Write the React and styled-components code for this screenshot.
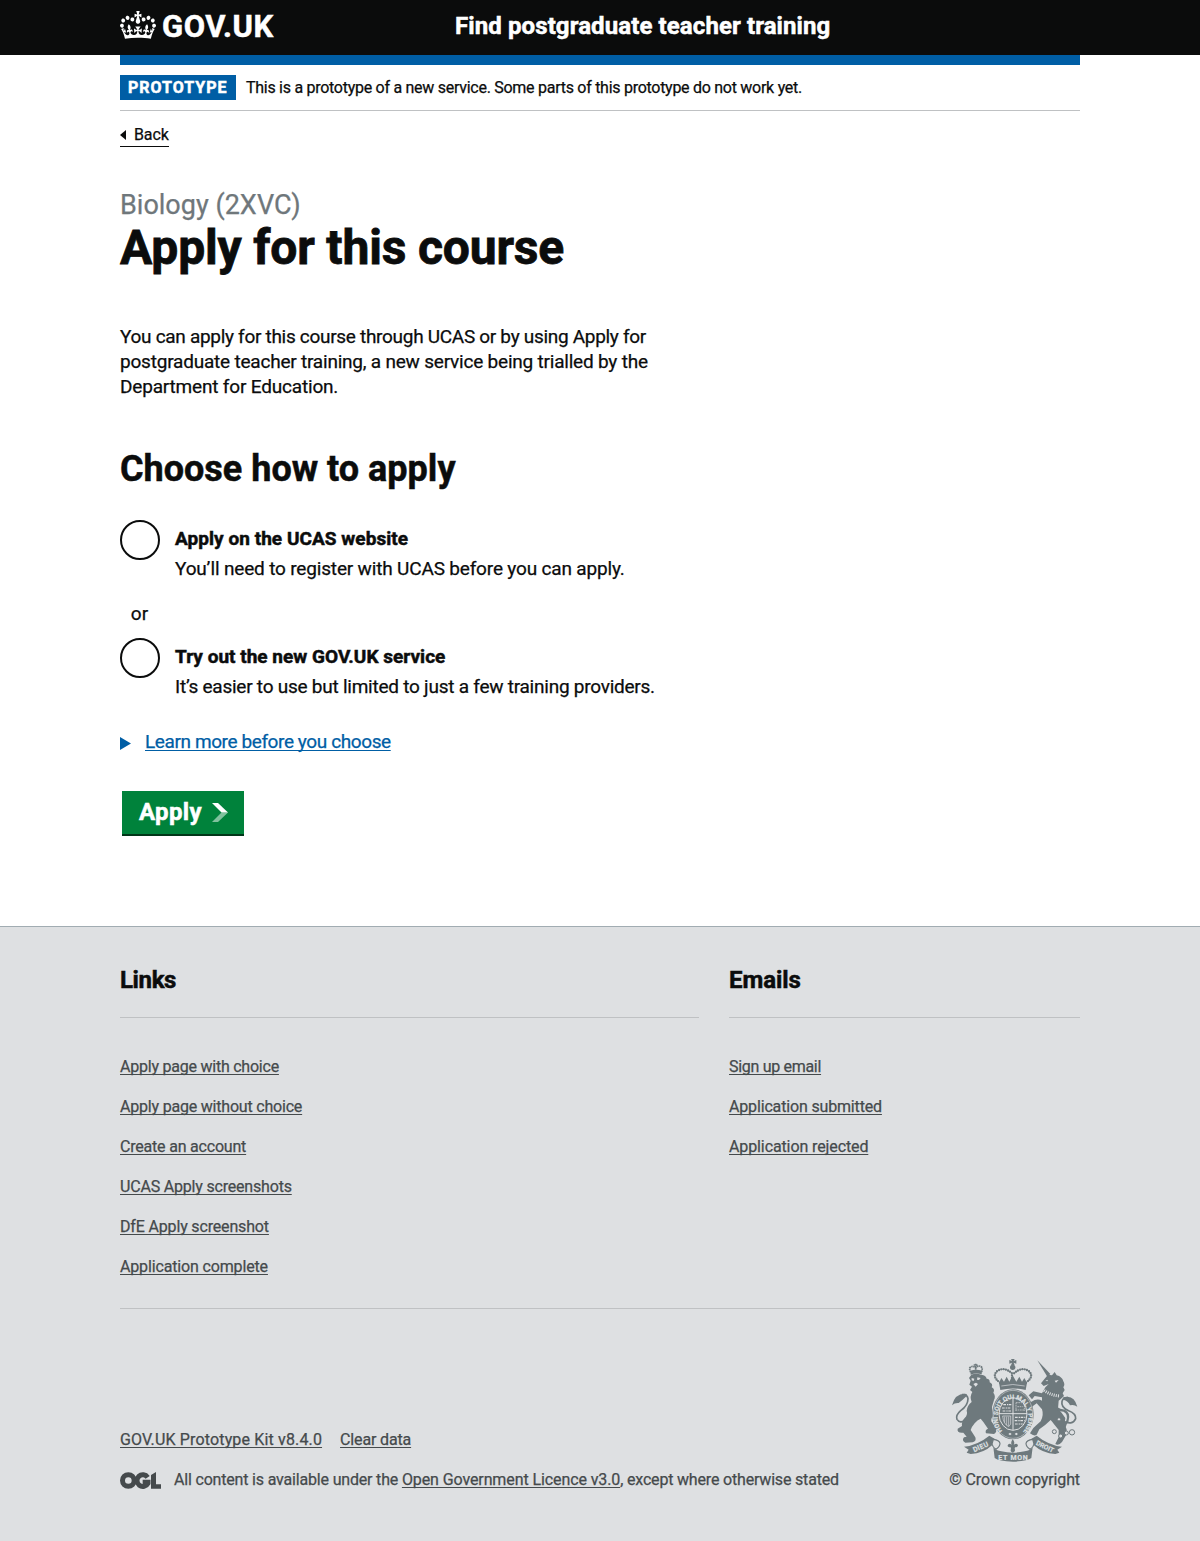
import React from "react";
import styled, { createGlobalStyle, css } from "styled-components";

const ink = "#0b0c0c";
const blue = "#005ea5";
const rule = "#bfc1c3";
const footerBg = "#dee0e2";
const footerInk = "#454a4c";
const crestInk = "#6e797d";

const GlobalStyle = createGlobalStyle`
  *, *::before, *::after { box-sizing: border-box; }
  body {
    margin: 0;
    background: #fff;
    color: ${ink};
    font-family: Roboto, "Liberation Sans", Arial, sans-serif;
    font-size: 19px;
    line-height: 25px;
    -webkit-text-stroke: 0.25px currentColor;
  }
  h1, h2, p, ul { margin: 0; padding: 0; font-weight: inherit; }
`;

const tracked = css`
  letter-spacing: ${(p) => p.$track || 0}px;
`;

const heavy = css`
  font-weight: 700;
  -webkit-text-stroke: 0.5px currentColor;
`;

const Page = styled.div`
  display: flex;
  flex-direction: column;
  min-height: 1541px;
`;

const Container = styled.div`
  width: 960px;
  margin: 0 auto;
`;

const Header = styled.header`
  height: 55px;
  background: ${ink};
  color: #fff;
`;

const HeaderGrid = styled(Container)`
  display: grid;
  grid-template-columns: 335px 1fr;
  align-items: start;
`;

const LogoLink = styled.a`
  display: flex;
  align-items: flex-start;
  gap: 6px;
  padding-top: 11px;
  color: #fff;
  svg { display: block; }
`;

const LogoText = styled.span`
  ${heavy}
  padding-top: 1px;
  font-size: 31px;
  line-height: 30px;
  letter-spacing: 0.6px;
`;

const ServiceName = styled.span`
  ${heavy}
  padding-top: 11px;
  font-size: 24px;
  line-height: 30px;
  letter-spacing: 0.1px;
`;

const PhaseBanner = styled.div`
  display: flex;
  align-items: center;
  gap: 10px;
  height: 56px;
  border-top: 10px solid ${blue};
  border-bottom: 1px solid ${rule};
  font-size: 16px;
  line-height: 20px;
`;

const PhaseTag = styled.strong`
  ${heavy}
  width: 116px;
  height: 25px;
  padding-left: 8px;
  background: ${blue};
  color: #fff;
  line-height: 25px;
  letter-spacing: 1px;
`;

const PhaseText = styled.span`
  letter-spacing: -0.275px;
`;

const BackLink = styled.a`
  display: flex;
  align-items: flex-start;
  gap: 8px;
  width: 49px;
  height: 22px;
  margin-top: 14px;
  border-bottom: 1px solid ${ink};
  color: ${ink};
  font-size: 16px;
  line-height: 20px;
  letter-spacing: -0.1px;
  svg { flex: none; margin-top: 5px; }
`;

const Main = styled.main`
  width: 960px;
  height: 779px;
  margin: 0 auto;
`;

const Caption = styled.span`
  display: block;
  margin: 43px 0 3px;
  color: #6f777b;
  font-size: 27px;
  line-height: 30px;
`;

const Title = styled.h1`
  ${heavy}
  -webkit-text-stroke-width: 0.8px;
  font-size: 48px;
  line-height: 50px;
  letter-spacing: -0.17px;
`;

const Intro = styled.p`
  margin-top: 51px;
`;

const Line = styled.span`
  display: block;
  white-space: nowrap;
  ${tracked}
`;

const Subtitle = styled.h2`
  ${heavy}
  margin: 50px 0 31px;
  font-size: 36px;
  line-height: 40px;
`;

const Radio = styled.label`
  display: grid;
  grid-template-columns: 40px 1fr;
  column-gap: 15px;
`;

const RadioInput = styled.input`
  appearance: none;
  width: 40px;
  height: 40px;
  margin: 0;
  border: 2px solid ${ink};
  border-radius: 50%;
  background: #fff;
`;

const RadioText = styled.span`
  display: flex;
  flex-direction: column;
  gap: 5px;
  padding-top: 6px;
`;

const RadioLabel = styled.strong`
  ${heavy}
  ${tracked}
`;

const RadioHint = styled.span`
  ${tracked}
`;

const Divider = styled.div`
  width: 39px;
  margin: 20px 0 12px;
  text-align: center;
`;

const underlined = css`
  text-decoration: underline;
  text-decoration-thickness: 1px;
  text-underline-offset: 2px;
  text-decoration-skip-ink: none;
`;

const Summary = styled.div`
  display: flex;
  align-items: center;
  gap: 14px;
  margin-top: 30px;
  color: ${blue};
  svg { position: relative; top: 2px; }
`;

const SummaryText = styled.span`
  ${underlined}
  letter-spacing: -0.4px;
`;

const StartButton = styled.button`
  display: flex;
  align-items: center;
  gap: 10px;
  width: 122px;
  height: 43px;
  margin: 37px 0 0 2px;
  padding: 0 0 1px 17px;
  border: 0;
  background: #00823b;
  box-shadow: 0 2px 0 #003618;
  color: #fff;
  font: 700 24px/30px Roboto, "Liberation Sans", Arial, sans-serif;
  letter-spacing: 0.35px;
  -webkit-text-stroke: 0.5px currentColor;
`;

const Footer = styled.footer`
  flex: 1;
  border-top: 1px solid #a1acb2;
  background: ${footerBg};
  color: ${footerInk};
  font-size: 16px;
  line-height: 20px;
`;

const FooterNav = styled(Container)`
  display: grid;
  grid-template-columns: 579px 351px;
  column-gap: 30px;
  height: 382px;
  padding-top: 38px;
  border-bottom: 1px solid ${rule};
`;

const FooterHeading = styled.h2`
  ${heavy}
  height: 53px;
  border-bottom: 1px solid ${rule};
  color: ${ink};
  font-size: 24px;
  line-height: 30px;
  ${tracked}
`;

const LinkList = styled.ul`
  display: flex;
  flex-direction: column;
  gap: 20px;
  margin-top: 39px;
  list-style: none;
`;

const FooterLink = styled.a`
  color: ${footerInk};
  ${underlined}
  ${tracked}
`;

const Meta = styled(Container)`
  display: flex;
  justify-content: space-between;
  align-items: flex-end;
  padding-top: 49px;
`;

const MetaInfo = styled.div`
  display: flex;
  flex-direction: column;
  gap: 20px;
`;

const MetaRow = styled.div`
  display: flex;
  align-items: center;
  gap: ${(p) => p.$gap}px;
  white-space: nowrap;
`;

const Licence = styled.span`
  letter-spacing: -0.18px;
`;

const Copyright = styled.a`
  display: flex;
  flex-direction: column;
  align-items: flex-end;
  gap: 8px;
  letter-spacing: -0.1px;
  svg { display: block; margin-right: 2px; -webkit-text-stroke: 0; }
`;

const Crown = () => (
  <svg width="36" height="28" viewBox="0 0 132 97" preserveAspectRatio="none" fill="currentColor" aria-hidden="true">
    <path fillRule="evenodd" d="M25 30.2c3.5 1.5 7.7-.2 9.1-3.7 1.5-3.6-.2-7.8-3.9-9.2-3.6-1.4-7.6.3-9.1 3.9-1.4 3.5.3 7.5 3.9 9zM9 39.5c3.6 1.5 7.8-.2 9.2-3.7 1.5-3.6-.2-7.8-3.9-9.1-3.6-1.5-7.6.2-9.1 3.8-1.4 3.5.3 7.5 3.8 9zM4.4 57.2c3.5 1.5 7.7-.2 9.1-3.8 1.5-3.6-.2-7.7-3.9-9.1-3.5-1.5-7.6.3-9.1 3.8-1.4 3.5.3 7.6 3.9 9.1zm38.3-21.4c3.5 1.5 7.7-.2 9.1-3.8 1.5-3.6-.2-7.7-3.9-9.1-3.6-1.5-7.6.3-9.1 3.8-1.3 3.6.4 7.7 3.9 9.1zm64.4-5.6c-3.6 1.5-7.8-.2-9.1-3.7-1.5-3.6.2-7.8 3.8-9.2 3.6-1.4 7.7.3 9.2 3.9 1.3 3.5-.4 7.5-3.9 9zm15.9 9.3c-3.6 1.5-7.7-.2-9.1-3.7-1.5-3.6.2-7.8 3.7-9.1 3.6-1.5 7.7.2 9.2 3.8 1.5 3.5-.3 7.5-3.8 9zm4.7 17.7c-3.6 1.5-7.8-.2-9.2-3.8-1.5-3.6.2-7.7 3.9-9.1 3.6-1.5 7.7.3 9.2 3.8 1.3 3.5-.4 7.6-3.9 9.1zM89.3 35.8c-3.6 1.5-7.8-.2-9.2-3.8-1.4-3.6.2-7.7 3.9-9.1 3.6-1.5 7.7.3 9.2 3.8 1.4 3.6-.3 7.7-3.9 9.1zM69.7 17.7l8.9 4.7V9.3l-8.9 2.8c-.2-.3-.5-.6-.9-.9L72.4 0H59.6l3.5 11.2c-.3.3-.6.5-.9.9l-8.8-2.8v13.1l8.8-4.7c.3.3.6.7.9.9l-5 15.4v.1c-.2.8-.4 1.6-.4 2.4 0 4.1 3.1 7.5 7 8.1h.2c.3 0 .7.1 1 .1.4 0 .7 0 1-.1h.2c4-.6 7.1-4.1 7.1-8.1 0-.8-.1-1.7-.4-2.4V34l-5.1-15.4c.4-.2.7-.6 1-.9zM66 92.8c16.9 0 32.8 1.1 47.1 3.2 4-16.9 8.9-26.7 14-33.5l-9.6-3.4c1 4.9 1.1 7.2 0 10.2-1.5-1.4-3-4.3-4.2-8.7L108.6 76c2.8-2 5-3.2 7.5-3.3-4.4 9.4-10 11.9-13.6 11.2-4.3-.8-6.3-4.6-5.6-7.9 1-4.7 5.7-5.9 8-.5 4.3-8.7-3-11.4-7.6-8.8 7.1-7.2 7.9-13.5 2.1-21.1-8 6.1-8.1 12.3-4.5 20.8-4.7-5.4-12.1-2.5-9.5 6.2 3.4-5.2 7.9-2 7.2 3.1-.6 4.3-6.4 7.8-13.5 7.2-10.3-.9-10.9-8-11.2-13.8 2.5-.5 7.1 1.8 11 7.3L80.2 60c-4.1 4.4-8 5.3-12.3 5.4 1.4-4.4 8-11.6 8-11.6H55.5s6.4 7.2 7.9 11.6c-4.2-.1-8-1-12.3-5.4l1.4 16.4c3.9-5.5 8.5-7.7 10.9-7.3-.3 5.8-.9 12.8-11.1 13.8-7.2.6-12.9-2.9-13.5-7.2-.7-5 3.8-8.3 7.1-3.1 2.7-8.7-4.6-11.6-9.4-6.2 3.7-8.5 3.6-14.7-4.6-20.8-5.8 7.6-5 13.9 2.2 21.1-4.7-2.6-11.9.1-7.7 8.8 2.3-5.5 7.1-4.2 8.1.5.7 3.3-1.3 7.1-5.7 7.9-3.5.7-9-1.8-13.5-11.2 2.5.1 4.7 1.3 7.5 3.3l-4.7-15.4c-1.2 4.4-2.7 7.2-4.3 8.7-1.1-3-.9-5.3 0-10.2l-9.5 3.4c5 6.9 9.9 16.7 14 33.5 14.8-2.1 30.8-3.2 47.7-3.2z" />
  </svg>
);

const OglLogo = () => (
  <svg width="41" height="17" viewBox="0 0 123 51" fill="none" stroke="currentColor" role="img" aria-label="Open Government Licence">
    <circle cx="25" cy="25.5" r="17.5" strokeWidth="15" />
    <path strokeWidth="15" d="M83 16A17.5 17.5 0 1 0 84 34V31H68" />
    <path fill="currentColor" stroke="none" d="M93 9L108 0V37H123V50H93Z" />
  </svg>
);

const Crest = () => (
  <svg width="128" height="104" viewBox="30 24 384 312" fill={crestInk} fontFamily="Roboto, sans-serif" fontWeight="700" aria-hidden="true">
    {/* Lion */}
    <path d="M94 74Q108 68 124 74Q138 76 140 86Q150 86 149 97Q160 102 155 112Q166 118 160 128Q168 138 162 150L156 170L158 198Q152 208 154 214L168 234Q172 246 162 252L138 250Q134 240 144 236L130 216L122 206Q112 210 104 220Q94 232 92 240L106 262Q110 274 98 277L76 278Q64 272 72 262L80 260L70 248Q50 250 53 236L66 228Q64 214 74 204Q84 194 80 182Q82 166 95 156Q88 140 97 126L90 120L96 110L88 104L92 92L87 84Z" />
    <path fill="none" stroke={crestInk} strokeWidth="5" d="M78 210Q60 222 51 208Q46 196 62 182Q84 166 84 146Q82 132 66 134" />
    <path d="M80 132Q46 128 36 166Q44 158 56 159Q68 150 80 138Z" />
    <path fill={footerBg} d="M95 84l8 2-2 7-6-2zM112 82l10 2-5 6-6-1zM100 102l8-4 6 4-7 8z" />
    <path fill="none" stroke={crestInk} strokeWidth="5" strokeDasharray="5 1.5" d="M92 67L88 55Q97 44 107 54Q118 42 127 54L125 66M107 41V68M101 45H113" />
    <path d="M91 62Q108 56 126 62L125 73Q108 67 92 74Z" />
    {/* Unicorn */}
    <path d="M292 31L331 72L322 80Z" />
    <path d="M324 74L336 76L344 66L350 76Q366 80 370 94Q376 104 370 112L374 120L368 130L372 138Q362 148 356 152L354 176Q368 190 376 204Q372 224 380 238L378 256L366 276Q356 288 346 282L356 262L356 240Q340 220 332 210Q318 224 298 238L290 254Q282 260 270 250L280 234L302 214Q312 196 306 178L290 160L276 170L266 160L284 150Q296 146 306 152L306 142L284 138L276 148L266 136L280 124L306 130L316 112L326 102L311 108L303 100L314 86Z" />
    <path fill="none" stroke={footerBg} strokeWidth="9" strokeDasharray="3 3.5" d="M312 121Q332 136 360 138" />
    <path fill={footerBg} d="M316 92l8-3-2 5zM344 92l12-2-8 8z" />
    <path fill="none" stroke={crestInk} strokeWidth="5" d="M366 212Q398 228 407 206Q408 190 386 182Q362 172 366 154Q369 142 384 143" />
    <path d="M370 142Q402 132 412 170Q402 162 390 166Q384 152 370 149Z" />
    <path fill="none" stroke={crestInk} strokeWidth="7" d="M330 152Q348 182 372 182Q390 190 382 214Q368 230 376 250" />
    <g fill={footerBg} stroke={crestInk} strokeWidth="3">
      <circle cx="357" cy="208" r="5" />
      <circle cx="343" cy="245" r="6" />
      <circle cx="362" cy="258" r="6" />
      <circle cx="379" cy="249" r="6" />
      <circle cx="396" cy="247" r="8" />
    </g>
    {/* Imperial crown */}
    <path d="M213 27h11l-3 6 8-3v11l-8-3 3 8h-11l3-8-8 3v-11l8 3z" />
    <circle cx="218" cy="52" r="8" />
    <path fill="none" stroke={crestInk} strokeWidth="7" strokeLinecap="round" strokeDasharray="0 7" d="M180 98Q153 78 173 62Q194 50 216 70V86M258 98Q285 78 265 62Q244 50 222 70" />
    <path d="M177 98L184 84L192 95L200 80L208 95L218 76L229 95L238 80L246 95L253 84L261 98L257 120Q218 111 181 120Z" />
    <path fill="none" stroke={footerBg} strokeWidth="2" d="M184 108Q218 99 254 108" />
    {/* Garter and shield */}
    <ellipse cx="219" cy="193" rx="62" ry="75" />
    <ellipse cx="219" cy="193" rx="59" ry="72" fill="none" stroke={footerBg} strokeWidth="1.5" />
    <ellipse cx="219" cy="192" rx="42" ry="49" fill="none" stroke={footerBg} strokeWidth="3" />
    <path id="garter-motto" fill="none" d="M187 243A46 56 0 1 1 251 243" />
    <text fontSize="19" fill={footerBg} stroke={footerBg} strokeWidth="0.6">
      <textPath href="#garter-motto" textLength="250" lengthAdjust="spacing">HONI SOIT QUI MAL Y PENSE</textPath>
    </text>
    <path fill="none" stroke={footerBg} strokeWidth="3" d="M219 144V240M177 191H261" />
    <path fill="none" stroke={footerBg} strokeWidth="3.5" strokeDasharray="8 3 4 2" d="M190 164H214M186 174H214M188 183H214M225 202H256M224 212H254M225 222H248" />
    <path fill="none" stroke={footerBg} strokeWidth="2" strokeDasharray="5 2" d="M228 158H246M226 180H255M228 158V182M253 166V182M232 170H248" />
    <path fill="none" stroke={footerBg} strokeWidth="2" d="M188 198H212V222L206 230Q190 222 188 198M194 200V218M200 200V226M206 200V228" />
    <path fill={footerBg} d="M205 252l5-4 5 4-5 4zM224 252l5-4 5 4-5 4z" />
    {/* Motto ribbon */}
    <path d="M72 290Q112 286 148 257L166 268Q160 278 158 284Q130 310 92 312L80 308L86 299Z" />
    <path d="M366 290Q326 286 290 257L272 268Q278 278 280 284Q308 310 346 312L358 308L352 299Z" />
    <path fill={footerBg} stroke={crestInk} strokeWidth="3.5" d="M160 268Q178 270 180 280Q180 290 168 298Q158 292 156 282ZM278 268Q260 270 258 280Q258 290 270 298Q280 292 282 282Z" />
    <path d="M160 292Q168 302 184 304Q219 312 254 304Q270 302 278 292L274 324Q262 334 219 335Q176 334 164 324Z" />
    <path d="M218 268Q226 278 221 284Q232 278 234 286Q234 292 225 292L224 296Q228 304 218 308Q209 304 213 296L212 292Q202 292 203 286Q206 278 215 284Q211 278 218 268Z" />
    <g fontSize="21" fill={footerBg} stroke={footerBg} strokeWidth="0.5" textAnchor="middle">
      <text transform="translate(125 297) rotate(-24)" letterSpacing="1">DIEU</text>
      <text transform="translate(312 296) rotate(26)" fontSize="20">DROIT</text>
      <text x="219" y="329" textLength="88">ET MON</text>
    </g>
  </svg>
);

const BackArrow = () => (
  <svg width="6" height="10" viewBox="0 0 6 10" fill={ink} aria-hidden="true"><path d="M6 0v10L0 5z" /></svg>
);
const DetailsArrow = () => (
  <svg width="11" height="13" viewBox="0 0 11 13" fill={blue} aria-hidden="true"><path d="M0 0l11 6.5L0 13z" /></svg>
);
const StartChevron = () => (
  <svg width="16" height="19" viewBox="0 0 16 19" fill="#fff" aria-hidden="true">
    <path d="M0 0h6l10 9.5H9.5z" />
    <path opacity=".5" d="M9.5 9.5H16L6 19H0z" />
  </svg>
);

const choices = [
  { id: "ucas", label: "Apply on the UCAS website", labelTrack: 0.05, hint: "You’ll need to register with UCAS before you can apply.", hintTrack: -0.17 },
  { id: "govuk", label: "Try out the new GOV.UK service", labelTrack: 0.02, hint: "It’s easier to use but limited to just a few training providers.", hintTrack: -0.24 },
];

const columns = [
  {
    title: "Links",
    track: -0.38,
    links: [
      ["Apply page with choice", -0.23],
      ["Apply page without choice", -0.2],
      ["Create an account", -0.2],
      ["UCAS Apply screenshots", -0.19],
      ["DfE Apply screenshot", -0.16],
      ["Application complete", -0.15],
    ],
  },
  {
    title: "Emails",
    track: -0.05,
    links: [["Sign up email", -0.3], ["Application submitted", -0.16], ["Application rejected", -0.11]],
  },
];

const Choice = ({ choice }) => (
  <Radio>
    <RadioInput type="radio" name="apply" value={choice.id} />
    <RadioText>
      <RadioLabel $track={choice.labelTrack}>{choice.label}</RadioLabel>
      <RadioHint $track={choice.hintTrack}>{choice.hint}</RadioHint>
    </RadioText>
  </Radio>
);

export default function App() {
  return (
    <Page>
      <GlobalStyle />
      <Header>
        <HeaderGrid>
          <LogoLink>
            <Crown />
            <LogoText>GOV.UK</LogoText>
          </LogoLink>
          <ServiceName>Find postgraduate teacher training</ServiceName>
        </HeaderGrid>
      </Header>
      <Container>
        <PhaseBanner>
          <PhaseTag>PROTOTYPE</PhaseTag>
          <PhaseText>This is a prototype of a new service. Some parts of this prototype do not work yet.</PhaseText>
        </PhaseBanner>
        <BackLink><BackArrow />Back</BackLink>
      </Container>
      <Main>
        <Caption>Biology (2XVC)</Caption>
        <Title>Apply for this course</Title>
        <Intro>
          <Line $track={-0.3}>You can apply for this course through UCAS or by using Apply for</Line>
          <Line $track={-0.21}>postgraduate teacher training, a new service being trialled by the</Line>
          <Line $track={-0.18}>Department for Education.</Line>
        </Intro>
        <Subtitle>Choose how to apply</Subtitle>
        <Choice choice={choices[0]} />
        <Divider>or</Divider>
        <Choice choice={choices[1]} />
        <Summary><DetailsArrow /><SummaryText>Learn more before you choose</SummaryText></Summary>
        <StartButton>Apply<StartChevron /></StartButton>
      </Main>
      <Footer>
        <FooterNav>
          {columns.map((col) => (
            <div key={col.title}>
              <FooterHeading $track={col.track}>{col.title}</FooterHeading>
              <LinkList>
                {col.links.map(([text, track]) => (
                  <li key={text}><FooterLink $track={track}>{text}</FooterLink></li>
                ))}
              </LinkList>
            </div>
          ))}
        </FooterNav>
        <Meta>
          <MetaInfo>
            <MetaRow $gap={18}>
              <FooterLink $track={0.15}>GOV.UK Prototype Kit v8.4.0</FooterLink>
              <FooterLink $track={-0.15}>Clear data</FooterLink>
            </MetaRow>
            <MetaRow $gap={13}>
              <OglLogo />
              <Licence>
                All content is available under the <FooterLink $track={-0.1}>Open Government Licence v3.0</FooterLink>, except where otherwise stated
              </Licence>
            </MetaRow>
          </MetaInfo>
          <Copyright><Crest />© Crown copyright</Copyright>
        </Meta>
      </Footer>
    </Page>
  );
}
